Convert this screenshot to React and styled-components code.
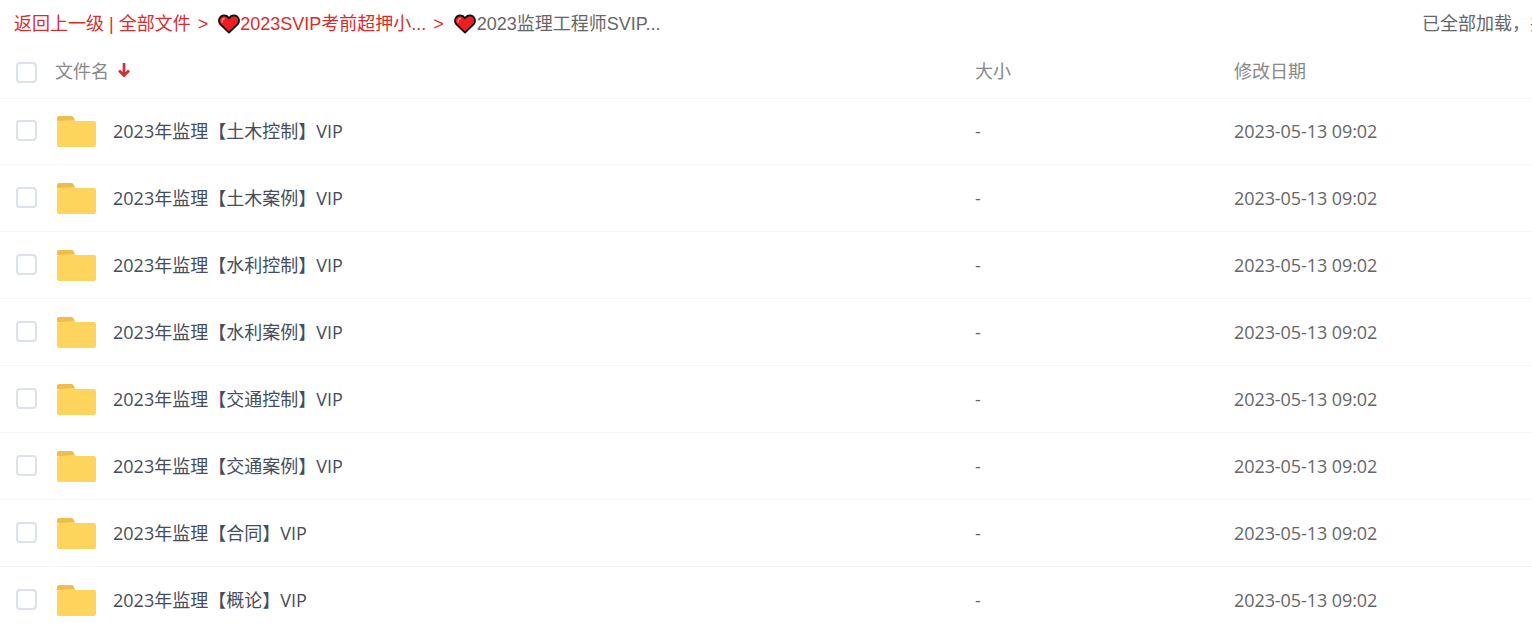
import React from "react";
import styled, { createGlobalStyle } from "styled-components";

const Global = createGlobalStyle`
  html, body { margin: 0; padding: 0; background: #fff; overflow: hidden; }
  body { font-family: "Open Sans", "Noto Sans CJK SC", sans-serif; }
`;
const Page = styled.div`
  width: 1532px;
  height: 633px;
  overflow: hidden;
`;
const Crumbs = styled.div`
  height: 47px;
  box-sizing: border-box;
  padding: 1px 0 0 14px;
  display: flex;
  align-items: center;
  justify-content: space-between;
  font: 18px/24px "Liberation Sans", "Noto Sans CJK SC", sans-serif;
  white-space: nowrap;
`;
const Trail = styled.div`
  display: flex;
  align-items: center;
  color: #d92c2c;
`;
const Current = styled.span`
  color: #666;
  margin-left: 1px;
`;
const Sep = styled.span`
  margin: 0 10px 0 7px;
`;
const Loaded = styled.div`
  width: 110px;
  overflow: hidden;
  color: #666;
`;
const HeaderRow = styled.div`
  display: grid;
  grid-template-columns: 55px 920px 259px 1fr;
  height: 52px;
  box-sizing: border-box;
  border-bottom: 1px solid #f2f5fb;
  align-items: center;
  padding-bottom: 5px;
  color: #888;
  font: 18px/24px "Noto Sans CJK SC", sans-serif;
`;
const Rows = styled.div`
  margin-top: -1px;
`;
const Row = styled.div`
  display: grid;
  grid-template-columns: 55px 920px 259px 1fr;
  height: 67px;
  box-sizing: border-box;
  border-bottom: 1px solid #f5f6fa;
  align-items: center;
  color: #666;
  font: 18px/24px "Open Sans", "Noto Sans CJK SC", sans-serif;
`;
const Check = styled.span`
  display: block;
  width: 21px;
  height: 21px;
  margin-left: 16px;
  margin-top: ${(p) => p.$top}px;
  box-sizing: border-box;
  border: 2px solid #dce2ec;
  border-radius: 4px;
  background: #fff;
`;
const NameCell = styled.div`
  display: flex;
  align-items: center;
  gap: 16px;
  color: #454d5a;
`;
const SortName = styled.div`
  display: flex;
  align-items: center;
  gap: 8px;
`;
const DateCell = styled.div`
  letter-spacing: -0.08px;
`;
const Folder = () => (
  <svg width="41" height="34" viewBox="0 0 41 34" style={{ marginLeft: 1, flexShrink: 0 }}>
    <path d="M1 7V4a2 2 0 0 1 2-2h12a3 3 0 0 1 3 2l1 3z" fill="#eebd4e" />
    <path d="M1 9a2 2 0 0 1 2-2l15-1 1 1h19a2 2 0 0 1 2 2v22a2 2 0 0 1-2 2H3a2 2 0 0 1-2-2z" fill="#ffd45c" />
  </svg>
);
const Heart = () => (
  <svg width="22" height="20" viewBox="0 0 22 20" style={{ flexShrink: 0 }}>
    <path d="M11 18.600 2.200 10.200C-.3 7 1.400 1.300 6 1.300c2.300 0 4 1.200 5 3 1-1.800 2.700-3 5-3 4.600 0 6.300 5.700 3.800 8.900z" fill="#ee1c25" stroke="#111" strokeWidth="1.800" strokeLinejoin="round" />
    <path d="M4.300 8.500c-.5-2.200.6-3.900 2.400-4.300" fill="none" stroke="#f98a8a" strokeWidth="1.600" />
  </svg>
);
const Arrow = () => (
  <svg width="14" height="15" viewBox="0 0 14 15">
    <path d="M7 0V12.500M2 7.500l5 5 5-5" fill="none" stroke="#d5302f" strokeWidth="2.700" />
  </svg>
);
const names = ["土木控制", "土木案例", "水利控制", "水利案例", "交通控制", "交通案例", "合同", "概论"];

export default function App() {
  return (
    <Page>
      <Global />
      <Crumbs>
        <Trail>
          返回上一级 | 全部文件<Sep>&gt;</Sep>
          <Heart />2023SVIP考前超押小...<Sep>&gt;</Sep>
          <Heart /><Current>2023监理工程师SVIP...</Current>
        </Trail>
        <Loaded>已全部加载，共8个</Loaded>
      </Crumbs>
      <HeaderRow>
        <Check $top={5} />
        <SortName>文件名 <Arrow /></SortName>
        <div>大小</div>
        <div>修改日期</div>
      </HeaderRow>
      <Rows>
        {names.map((n) => (
          <Row key={n}>
            <Check $top={-1} />
            <NameCell><Folder />2023年监理【{n}】VIP</NameCell>
            <div>-</div>
            <DateCell>2023-05-13 09:02</DateCell>
          </Row>
        ))}
      </Rows>
    </Page>
  );
}
